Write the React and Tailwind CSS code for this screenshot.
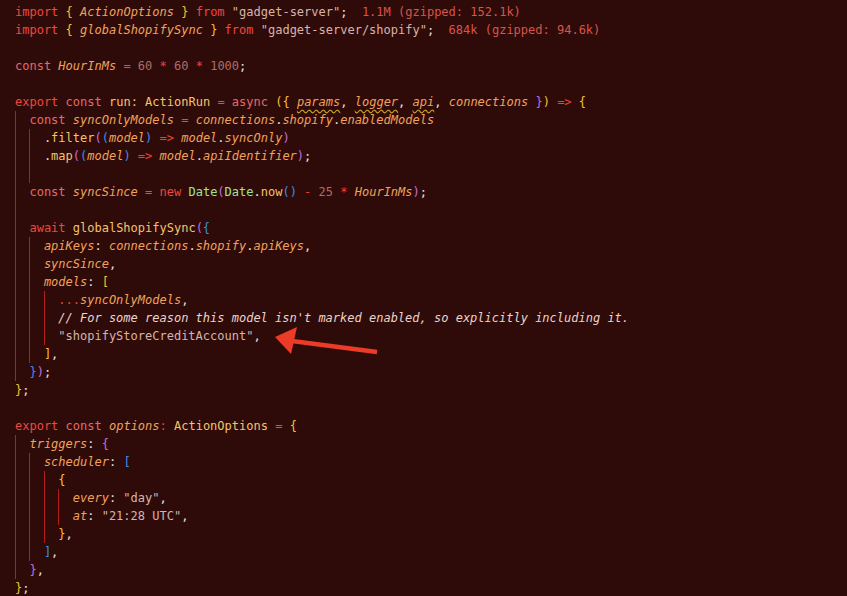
import React from "react";

const K = "text-[#f0473e]";
const C = "text-[#e5696a]";
const V = "text-[#f2a25a] italic";
const U = "text-[#f2a25a] italic underline decoration-wavy decoration-[#c9a227] underline-offset-[3px]";
const Y = "text-[#f7c22b]";
const P = "text-[#c76fd6]";
const B = "text-[#3d8fe6]";
const O = "text-[#c65a5a]";
const N = "text-[#b06d67]";
const S = "text-[#d9b3aa]";
const W = "text-[#e8e0dc]";
const F = "text-[#f5c36a]";
const G = "text-[#9ee39a]";
const R = "text-[#f0403a]";
const M = "text-[#ecd3cc] italic";
const A = "text-[#d9544a]";
const X = "";

const lines = [
  { g: [], t: [["import", K], [" "], ["{", Y], [" "], ["ActionOptions", V], [" "], ["}", Y], [" "], ["from", K], [" "], ['"gadget-server"', S], [";", W], ["  1.1M (gzipped: 152.1k)", A]] },
  { g: [], t: [["import", K], [" "], ["{", Y], [" "], ["globalShopifySync", V], [" "], ["}", Y], [" "], ["from", K], [" "], ['"gadget-server/shopify"', S], [";", W], ["  684k (gzipped: 94.6k)", A]] },
  { g: [], t: [] },
  { g: [], t: [["const", C], [" "], ["HourInMs", V], [" "], ["=", O], [" "], ["60", N], [" "], ["*", R], [" "], ["60", N], [" "], ["*", R], [" "], ["1000", N], [";", W]] },
  { g: [], t: [] },
  { g: [], t: [["export", K], [" "], ["const", C], [" "], ["run", F], [":", F], [" "], ["ActionRun", F], [" "], ["=", O], [" "], ["async", C], [" "], ["(", Y], ["{", Y], [" "], ["params", U], [",", W], [" "], ["logger", U], [",", W], [" "], ["api", U], [",", W], [" "], ["connections", V], [" "], ["}", P], [")", Y], [" "], ["=>", R], [" "], ["{", Y]] },
  { g: [1], t: [["const", C], [" "], ["syncOnlyModels", V], [" "], ["=", O], [" "], ["connections", V], [".", W], ["shopify", V], [".", W], ["enabledModels", V]] },
  { g: [1, 1], t: [[".", W], ["filter", F], ["(", P], ["(", B], ["model", V], [")", B], [" "], ["=>", R], [" "], ["model", V], [".", W], ["syncOnly", V], [")", P]] },
  { g: [1, 1], t: [[".", W], ["map", F], ["(", P], ["(", B], ["model", V], [")", B], [" "], ["=>", R], [" "], ["model", V], [".", W], ["apiIdentifier", V], [")", P], [";", W]] },
  { g: [1, 1], t: [] },
  { g: [1], t: [["const", C], [" "], ["syncSince", V], [" "], ["=", O], [" "], ["new", K], [" "], ["Date", G], ["(", P], ["Date", G], [".", W], ["now", F], ["()", B], [" "], ["-", R], [" "], ["25", N], [" "], ["*", R], [" "], ["HourInMs", V], [")", P], [";", W]] },
  { g: [1], t: [] },
  { g: [1], t: [["await", K], [" "], ["globalShopifySync", F], ["(", P], ["{", B]] },
  { g: [1, 1], t: [["apiKeys", V], [":", W], [" "], ["connections", V], [".", W], ["shopify", V], [".", W], ["apiKeys", V], [",", W]] },
  { g: [1, 1], t: [["syncSince", V], [",", W]] },
  { g: [1, 1], t: [["models", V], [":", W], [" "], ["[", Y]] },
  { g: [1, 1, 1], t: [["...", R], ["syncOnlyModels", V], [",", W]] },
  { g: [1, 1, 1], t: [["// For some reason this model isn't marked enabled, so explicitly including it.", M]] },
  { g: [1, 1, 1], t: [['"shopifyStoreCreditAccount"', S], [",", W]] },
  { g: [1, 1], t: [["]", Y], [",", W]] },
  { g: [1], t: [["}", B], [")", P], [";", W]] },
  { g: [], t: [["}", Y], [";", W]] },
  { g: [], t: [] },
  { g: [], t: [["export", K], [" "], ["const", C], [" "], ["options", V], [":", R], [" "], ["ActionOptions", F], [" "], ["=", O], [" "], ["{", Y]] },
  { g: [1], t: [["triggers", V], [":", W], [" "], ["{", P]] },
  { g: [1, 1], t: [["scheduler", V], [":", W], [" "], ["[", B]] },
  { g: [1, 1, 1], t: [["{", Y]] },
  { g: [1, 1, 1, 1], t: [["every", V], [":", W], [" "], ['"day"', S], [",", W]] },
  { g: [1, 1, 1, 1], t: [["at", V], [":", W], [" "], ['"21:28 UTC"', S], [",", W]] },
  { g: [1, 1, 1], t: [["}", Y], [",", W]] },
  { g: [1, 1], t: [["]", B], [",", W]] },
  { g: [1], t: [["}", P], [",", W]] },
  { g: [], t: [["}", Y], [";", W]] },
];

function Line({ g, t }) {
  return (
    <div className="flex h-[18px] leading-[18px] whitespace-pre">
      {g.map((_, i) => (
        <span key={i} className="inline-block w-[2ch] shrink-0 border-l border-[#b3201c]" />
      ))}
      {t.map(([txt, cls], i) => (
        <span key={i} className={cls || X}>
          {txt}
        </span>
      ))}
    </div>
  );
}

export default function App() {
  return (
    <div className="relative w-[847px] h-[596px] overflow-hidden bg-[#2e0b09] pl-[15px] pt-[3px] text-[12px] text-[#e8e0dc] font-['DejaVu_Sans_Mono',monospace]">
      {lines.map((l, i) => (
        <Line key={i} g={l.g} t={l.t} />
      ))}
      <svg className="absolute left-0 top-0 pointer-events-none" width="847" height="596" viewBox="0 0 847 596">
        <line x1="292" y1="341" x2="377" y2="352" stroke="#ec3b27" strokeWidth="4.5" strokeLinecap="butt" />
        <polygon points="275,337 297,327 291,354" fill="#ec3b27" />
      </svg>
    </div>
  );
}
